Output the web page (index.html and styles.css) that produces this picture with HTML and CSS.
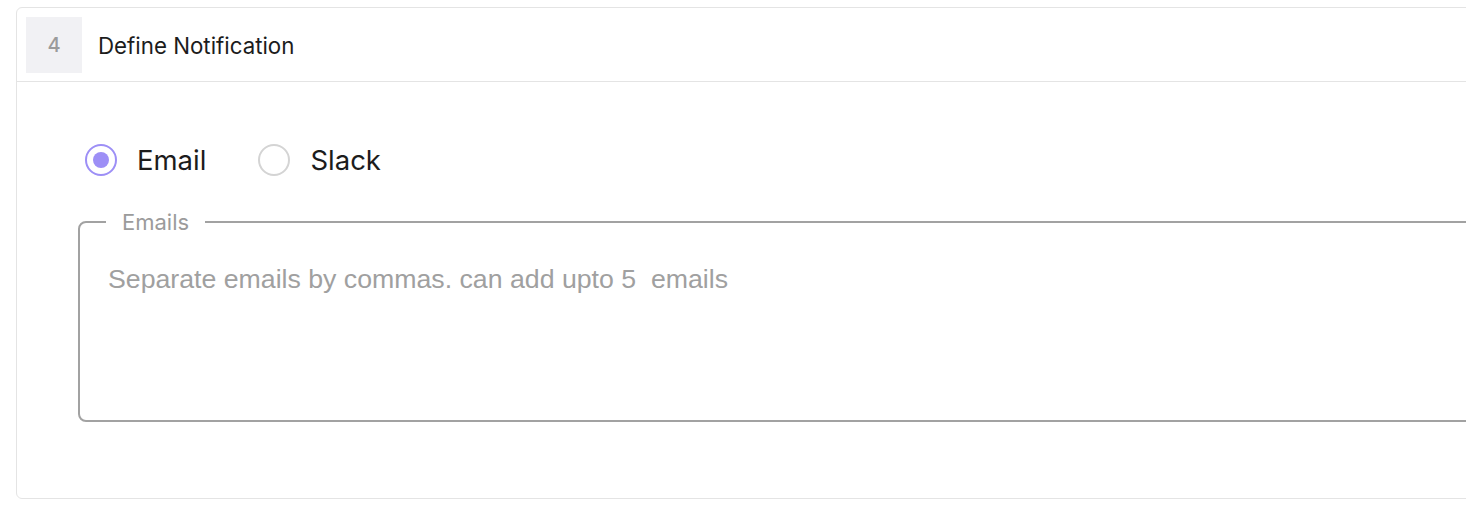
FILE: index.html
```html
<!DOCTYPE html>
<html>
<head>
<meta charset="utf-8">
<link rel="stylesheet" href="styles.css">
</head>
<body>
<div class="card">
  <div class="card-header">
    <div class="step">4</div>
    <div class="title">Define Notification</div>
  </div>
  <div class="card-body">
    <div class="radios">
      <label class="radio">
        <input type="radio" name="ch" checked>
        <span class="ring"></span>
        <span class="radio-label">Email</span>
      </label>
      <label class="radio">
        <input type="radio" name="ch">
        <span class="ring"></span>
        <span class="radio-label">Slack</span>
      </label>
    </div>
    <fieldset class="field">
      <legend class="field-legend">Emails</legend>
      <textarea class="field-input" placeholder="Separate emails by commas. can add upto 5  emails"></textarea>
    </fieldset>
  </div>
</div>
</body>
</html>
```
FILE: styles.css
```css
html, body {
  margin: 0;
  padding: 0;
  background: #ffffff;
  overflow: hidden;
}
body {
  padding: 7px 0 0 16px;
  font-family: Inter, "Noto Sans", sans-serif;
  color: #1c1c1c;
}
.card {
  width: 1500px;
  border: 1px solid #e4e4e4;
  border-radius: 6px;
  background: #ffffff;
}
.card-header {
  display: flex;
  align-items: center;
  gap: 16px;
  padding: 9px 9px 8px;
  border-bottom: 1px solid #e4e4e4;
}
.step {
  width: 56px;
  height: 56px;
  display: flex;
  align-items: center;
  justify-content: center;
  background: #f1f1f4;
  color: #9b9b9b;
  font-size: 20px;
  font-weight: 500;
}
.title {
  font-size: 22.3px;
  font-weight: 400;
  color: #1c1c1c;
}
.card-body {
  padding: 62px 0 76px 61px;
}
.radios {
  display: flex;
  align-items: center;
  gap: 52px;
  margin-left: 7px;
  height: 32px;
}
.radio {
  display: flex;
  align-items: center;
  gap: 20px;
  cursor: pointer;
}
.radio input {
  display: none;
}
.ring {
  box-sizing: border-box;
  width: 32px;
  height: 32px;
  border-radius: 50%;
  border: 2px solid #d4d4d4;
  background: #fff;
  position: relative;
}
.radio input:checked + .ring {
  border-color: #9d8ff6;
}
.radio input:checked + .ring::after {
  content: "";
  position: absolute;
  left: 6px;
  top: 6px;
  width: 16px;
  height: 16px;
  border-radius: 50%;
  background: #9d8ff6;
}
.radio-label {
  font-size: 27.5px;
  color: #1c1c1c;
}
.field {
  margin: 33px 0 0 0;
  padding: 29px 26px 0;
  border: 2px solid #a2a2a2;
  border-radius: 8px;
  min-width: 0;
}
.field-legend {
  padding: 0 16px;
  font-size: 22px;
  line-height: 26px;
  color: #9b9b9b;
}
.field-input {
  display: block;
  box-sizing: border-box;
  width: 100%;
  height: 156px;
  padding: 0 2px;
  border: none;
  outline: none;
  resize: none;
  background: transparent;
  font-family: "Liberation Sans", Arial, sans-serif;
  font-size: 26.7px;
  line-height: 30px;
  color: #333;
}
.field-input::placeholder {
  color: #a0a0a0;
}
```
